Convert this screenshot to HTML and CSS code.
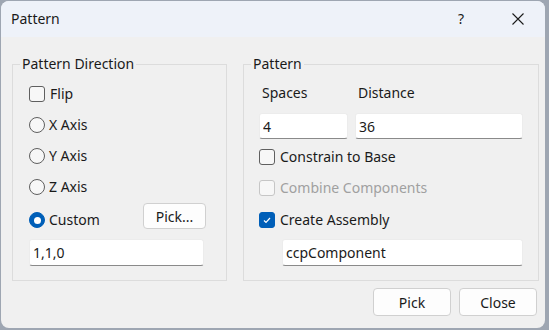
FILE: index.html
```html
<!DOCTYPE html>
<html lang="en">
<head>
    <meta charset="UTF-8">
    <title>Pattern</title>
    <link rel="stylesheet" href="styles.css">
</head>
<body>
    <div class="window">
        <div class="titlebar">
            <span class="title">Pattern</span>
            <span class="help">?</span>
            <svg class="close-icon" width="12" height="12" viewBox="0 0 12 12">
                <path d="M0.5 0.5 L11.5 11.5 M11.5 0.5 L0.5 11.5" stroke="#1b1b1b" stroke-width="1.1" fill="none"/>
            </svg>
        </div>

        <div class="content">
            <div class="groups">
                <fieldset class="group group-direction">
                    <legend>Pattern Direction</legend>
                    <div class="group-body">
                        <label class="option"><span class="check"></span>Flip</label>
                        <label class="option"><span class="radio"></span>X Axis</label>
                        <label class="option"><span class="radio"></span>Y Axis</label>
                        <label class="option"><span class="radio"></span>Z Axis</label>
                        <div class="custom-row">
                            <label class="option"><span class="radio checked"></span>Custom</label>
                            <button class="btn btn-pick-dir">Pick...</button>
                        </div>
                        <input class="field field-vector" type="text" value="1,1,0">
                    </div>
                </fieldset>

                <fieldset class="group group-pattern">
                    <legend>Pattern</legend>
                    <div class="group-body">
                        <div class="pair labels">
                            <span>Spaces</span>
                            <span>Distance</span>
                        </div>
                        <div class="pair inputs">
                            <input class="field" type="text" value="4">
                            <input class="field" type="text" value="36">
                        </div>
                        <label class="option opt-constrain"><span class="check"></span>Constrain to Base</label>
                        <label class="option opt-combine disabled"><span class="check"></span>Combine Components</label>
                        <label class="option opt-assembly">
                            <span class="check checked">
                                <svg width="16" height="16" viewBox="0 0 16 16">
                                    <polyline points="5,8.5 7,10.5 11,6" stroke="#fff" stroke-width="1.2" fill="none"/>
                                </svg>
                            </span>Create Assembly
                        </label>
                        <input class="field field-name" type="text" value="ccpComponent">
                    </div>
                </fieldset>
            </div>

            <div class="actions">
                <button class="btn btn-action">Pick</button>
                <button class="btn btn-action">Close</button>
            </div>
        </div>
    </div>
</body>
</html>
```

FILE: styles.css
```css
* {
    margin: 0;
    padding: 0;
    box-sizing: border-box;
}

body {
    background: #9ea6b2;
    font-family: "Noto Sans", "Open Sans", sans-serif;
    font-size: 14px;
    color: #1a1a1a;
    width: 549px;
    height: 330px;
    overflow: hidden;
}

.window {
    margin: 1px 0 0 1px;
    width: 544px;
    height: 327px;
    border-radius: 8px;
    background: #f0f0f0;
    overflow: hidden;
}

.titlebar {
    display: flex;
    align-items: center;
    height: 36px;
    background: #eef2f9;
    padding: 0 21px 0 10px;
}

.title {
    line-height: 20px;
}

.help {
    margin-left: auto;
    width: 20px;
    text-align: center;
    margin-right: 41px;
    line-height: 20px;
}

.close-icon {
    display: block;
}

.content {
    padding: 17px 0 0 11px;
}

.groups {
    display: flex;
    gap: 16px;
}

.group {
    border: 1px solid #dcdcdc;
    height: 227px;
}

.group legend {
    line-height: 20px;
    padding: 0 2px;
}

.group-direction {
    width: 215px;
    padding: 0 20px 0 16px;
}

.group-direction legend {
    margin-left: -9px;
}

.group-pattern {
    width: 296px;
    padding: 0 15px;
}

.group-pattern legend {
    margin-left: -8px;
}

.group-body {
    display: flex;
    flex-direction: column;
}

.group-direction .group-body {
    padding-top: 10px;
    gap: 11px;
}

.option {
    display: flex;
    align-items: center;
    height: 20px;
    line-height: 20px;
}

.check,
.radio {
    width: 16px;
    height: 16px;
    border: 1px solid #5f5f5f;
    background: #f7f7f7;
    margin-right: 4px;
    flex-shrink: 0;
}

.check {
    border-radius: 3px;
    margin-right: 5px;
}

.check svg {
    display: block;
    margin: -1px;
}

.check.checked {
    background: #005fb8;
    border-color: #005fb8;
}

.radio {
    border-radius: 50%;
}

.radio.checked {
    background: #005fb8;
    border-color: #005fb8;
    display: flex;
    align-items: center;
    justify-content: center;
}

.radio.checked::after {
    content: "";
    width: 7px;
    height: 7px;
    border-radius: 50%;
    background: #fff;
}

.custom-row {
    display: flex;
    align-items: flex-end;
    height: 27px;
    margin-top: -5px;
}

.btn {
    font-family: inherit;
    font-size: 14px;
    color: #1a1a1a;
    background: #fdfdfd;
    border: 1px solid #d0d0d0;
    border-radius: 4px;
}

.btn-pick-dir {
    align-self: flex-start;
    margin-left: auto;
    width: 63px;
    height: 26px;
}

.field {
    font-family: inherit;
    font-size: 14px;
    color: #1a1a1a;
    background: #fff;
    border: 1px solid #ececec;
    border-bottom-color: #8a8a8a;
    border-radius: 3px;
    padding: 0 3px;
    height: 26px;
    outline: none;
}

.field-vector {
    width: 175px;
    height: 27px;
    margin-top: -2px;
}

.pair {
    display: grid;
    grid-template-columns: 89px 168px;
    gap: 7px;
}

.labels {
    margin-top: 9px;
    line-height: 20px;
}

.labels span {
    padding-left: 3px;
}

.inputs {
    margin-top: 10px;
}

.inputs .field {
    width: 100%;
}

.opt-constrain {
    margin-top: 8px;
}

.opt-combine {
    margin-top: 11px;
}

.opt-assembly {
    margin-top: 12px;
}

.disabled {
    color: #a0a0a0;
}

.disabled .check {
    border-color: #c6c6c6;
}

.field-name {
    margin: 9px 0 0 23px;
    width: 241px;
    height: 27px;
}

.actions {
    display: flex;
    justify-content: flex-end;
    gap: 8px;
    padding: 7px 8px 0 0;
}

.btn-action {
    width: 78px;
    height: 28px;
}
```
